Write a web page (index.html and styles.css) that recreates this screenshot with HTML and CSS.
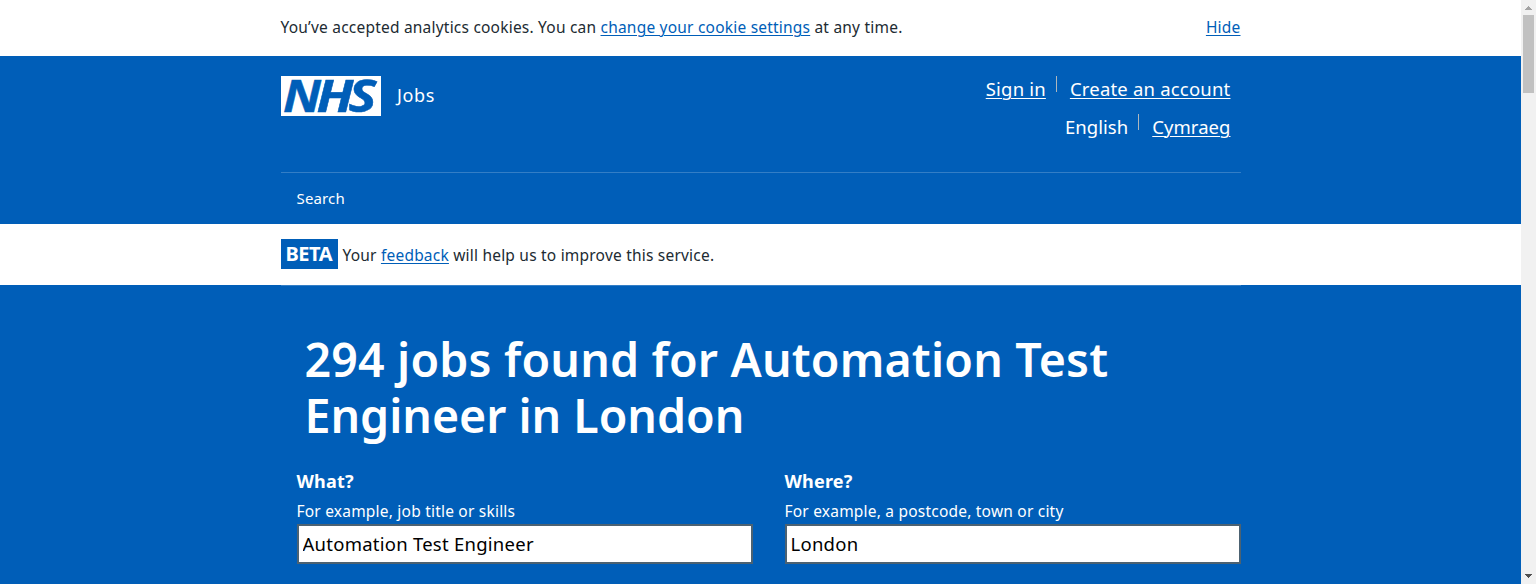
FILE: index.html
```html
<!DOCTYPE html>
<html lang="en">
<head>
<meta charset="utf-8">
<title>NHS Jobs - Search results</title>
<link rel="stylesheet" href="styles.css">
</head>
<body>
<div class="window">
  <div class="page">
    <div class="cookie-banner">
      <div class="container cookie-row">
        <p class="cookie-text">You’ve accepted analytics cookies. You can <a href="#">change your cookie settings</a> at any time.</p>
        <a class="hide" href="#">Hide</a>
      </div>
    </div>
    <header class="header">
      <div class="container header-top">
        <a class="brand" href="#">
          <svg class="logo" viewBox="0 0 100 40" role="img" aria-label="NHS">
            <rect width="100" height="40" fill="#fff"/>
            <g class="logo-text">
              <text x="2" y="36" textLength="38" lengthAdjust="spacingAndGlyphs">N</text>
              <text x="35.500" y="36" textLength="37" lengthAdjust="spacingAndGlyphs">H</text>
              <text x="67.500" y="36" textLength="28" lengthAdjust="spacingAndGlyphs">S</text>
            </g>
          </svg>
          <span class="service">Jobs</span>
        </a>
        <div class="account">
          <ul class="links">
            <li class="first"><a href="#">Sign in</a></li>
            <li><a href="#">Create an account</a></li>
          </ul>
          <ul class="links lang">
            <li class="first">English</li>
            <li><a href="#">Cymraeg</a></li>
          </ul>
        </div>
      </div>
      <nav class="container nav"><a href="#">Search</a></nav>
    </header>
    <div class="beta">
      <div class="container beta-row">
        <strong class="tag">BETA</strong>
        <p class="beta-text">Your <a href="#">feedback</a> will help us to improve this service.</p>
      </div>
    </div>
    <main class="search">
      <div class="container search-inner">
        <h1>294 jobs found for Automation Test<br><span class="place">Engineer in London</span></h1>
        <form class="fields">
          <div class="field">
            <label for="what">What?</label>
            <span class="hint">For example, job title or skills</span>
            <input id="what" value="Automation Test Engineer">
          </div>
          <div class="field">
            <label for="where">Where?</label>
            <span class="hint">For example, a postcode, town or city</span>
            <input id="where" value="London">
          </div>
        </form>
      </div>
    </main>
  </div>
  <div class="scrollbar">
    <svg class="arrow" viewBox="0 0 15 15"><path d="M7 6h1v1h1v1h1v1h1v1H4V9h1V8h1V7h1z" fill="#a3a3a3"/></svg>
    <div class="thumb"></div>
    <svg class="arrow down" viewBox="0 0 15 15"><path d="M4 5h7v1h-1v1H9v1H8v1H7V8H6V7H5V6H4z" fill="#505050"/></svg>
  </div>
</div>
</body>
</html>
```
FILE: styles.css
```css
* { box-sizing: border-box; }
body { margin: 0; overflow: hidden; font-family: "Noto Sans", "Open Sans", sans-serif; color: #212b32; font-size: 15.5px; letter-spacing: 0.21px; line-height: 24px; }
p, h1, ul { margin: 0; padding: 0; }
ul { list-style: none; }
a { color: #005eb8; text-underline-offset: 2px; text-decoration-thickness: 1px; }
.window { display: flex; height: 584px; overflow: hidden; }
.page { flex: 1; background: #005eb8; overflow: hidden; }
.container { width: 960px; margin: 0 auto; }
.cookie-banner { background: #fff; height: 56px; }
.cookie-row { display: flex; justify-content: space-between; padding-top: 15px; white-space: pre; }
.header { height: 168px; color: #fff; }
.header a { color: #fff; }
.header-top { display: flex; justify-content: space-between; height: 116px; padding-top: 20px; }
.brand { display: flex; height: 40px; text-decoration: none; gap: 16.5px; }
.logo { width: 100px; height: 40px; }
.logo-text { font: italic 700 45px "Open Sans", "Noto Sans", sans-serif; letter-spacing: 0; fill: #005eb8; stroke: #005eb8; stroke-width: 0.5px; }
.service { font-size: 18px; line-height: 39px; letter-spacing: 0.6px; }
.account { padding-right: 10px; font-size: 18.5px; line-height: 25px; letter-spacing: 0.2px; }
.links { display: flex; justify-content: flex-end; height: 38px; white-space: nowrap; }
.links .first { background: linear-gradient(#aeb7bd, #aeb7bd) no-repeat right top / 1px 16px; padding-right: 11px; margin-right: 13px; }
.lang { letter-spacing: 0.05px; }
.nav { border-top: 1px solid #337ec6; height: 52px; padding: 13px 16px; }
.nav a { text-decoration: none; font-size: 15px; letter-spacing: 0.15px; }
.beta { background: #fff; height: 61px; }
.beta-row { display: flex; padding-top: 15px; gap: 5px; white-space: pre; }
.tag { background: #005eb8; color: #fff; width: 57px; height: 30px; padding-left: 5px; font-size: 20px; line-height: 30px; letter-spacing: -0.5px; }
.beta-text { padding-top: 4px; }
.search { color: #fff; }
.search-inner { border-top: 1px solid #337ec6; padding: 45px 0 0 16px; }
h1 { padding-left: 8px; font-size: 46.5px; line-height: 56px; font-weight: 650; letter-spacing: 0.18px; white-space: nowrap; }
.place { letter-spacing: -0.03px; }
.fields { display: grid; grid-template-columns: 456px 456px; gap: 32px; padding-top: 24px; }
.field { display: flex; flex-direction: column; }
label { font-size: 18px; line-height: 28px; font-weight: 700; letter-spacing: 0.2px; }
.hint { line-height: 24px; padding-top: 4px; height: 29px; }
input { height: 40px; width: 456px; margin: 0; border: 2px solid #4c6272; border-radius: 0; background: #fff; color: #000; padding: 0 4px 2px; font: 18.5px/28px "Noto Sans", "Open Sans", sans-serif; letter-spacing: 0.25px; }
.scrollbar { width: 15px; background: #f1f1f1; display: flex; flex-direction: column; align-items: center; }
.arrow { width: 15px; height: 15px; display: block; shape-rendering: crispEdges; }
.thumb { width: 11px; height: 78px; background: #c1c1c1; }
.down { margin-top: auto; }
```
